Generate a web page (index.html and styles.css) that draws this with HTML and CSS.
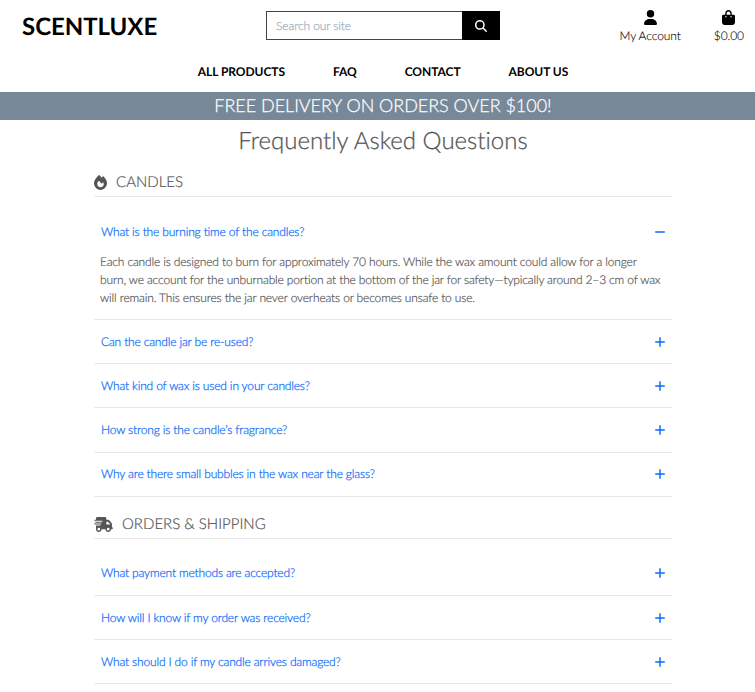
FILE: index.html
```html
<!DOCTYPE html>
<html lang="en">
<head>
<meta charset="utf-8">
<title>Frequently Asked Questions - ScentLuxe</title>
<link rel="stylesheet" href="styles.css">
</head>
<body>
<svg class="sprite" aria-hidden="true">
  <symbol id="plus" viewBox="0 0 10 10"><path d="M5 .2v9.6M.2 5h9.6" stroke="currentColor" stroke-width="1.5"/></symbol>
  <symbol id="minus" viewBox="0 0 10 10"><path d="M.2 5h9.6" stroke="currentColor" stroke-width="1.5"/></symbol>
</svg>
<header class="top">
  <a class="logo" href="#">SCENTLUXE</a>
  <form class="search">
    <input class="search-input" type="text" placeholder="Search our site">
    <button class="search-btn" type="button" aria-label="Search"><svg viewBox="0 0 512 512"><path fill="currentColor" d="M416 208c0 45.900-14.900 88.300-40 122.700L502.600 457.400c12.500 12.500 12.500 32.800 0 45.300s-32.800 12.500-45.300 0L330.700 376c-34.400 25.200-76.800 40-122.700 40C93.100 416 0 322.900 0 208S93.100 0 208 0S416 93.100 416 208zM208 352a144 144 0 1 0 0-288 144 144 0 1 0 0 288z"/></svg></button>
  </form>
  <div class="user">
    <a class="user-link" href="#"><svg class="i-user" viewBox="0 0 448 512"><path d="M224 256A128 128 0 1 0 224 0a128 128 0 1 0 0 256zm-45.700 48C79.800 304 0 383.800 0 482.300C0 498.700 13.300 512 29.700 512H418.300c16.400 0 29.700-13.300 29.700-29.700C448 383.800 368.200 304 269.700 304H178.300z"/></svg><span>My Account</span></a>
    <a class="user-link" href="#"><svg class="i-bag" viewBox="0 0 448 512"><path d="M160 112c0-35.300 28.700-64 64-64s64 28.700 64 64v48H160V112zm-48 48H48c-26.500 0-48 21.500-48 48V416c0 53 43 96 96 96H352c53 0 96-43 96-96V208c0-26.500-21.500-48-48-48H336V112C336 50.100 285.900 0 224 0S112 50.100 112 112v48zm24 48a24 24 0 1 1 0 48 24 24 0 1 1 0-48zm152 24a24 24 0 1 1 48 0 24 24 0 1 1-48 0z"/></svg><span>$0.00</span></a>
  </div>
</header>
<nav class="nav"><a href="#">ALL PRODUCTS</a><a href="#">FAQ</a><a href="#">CONTACT</a><a href="#">ABOUT US</a></nav>
<div class="banner">FREE DELIVERY ON ORDERS OVER $100!</div>
<main class="faq">
  <h1 class="title">Frequently Asked Questions</h1>
  <section class="group">
    <h2 class="heading"><svg class="i-fire" viewBox="0 0 448 512"><path fill="currentColor" d="M159.300 5.400c7.800-7.300 19.900-7.200 27.700 .1c27.600 25.900 53.500 53.800 77.700 84c11-14.400 23.500-30.100 37-42.900c7.900-7.400 20.100-7.400 28 .1c34.600 33 63.900 76.600 84.500 118c20.300 40.800 33.800 82.500 33.800 111.900C448 404.200 348.200 512 224 512C98.400 512 0 404.100 0 276.500c0-38.400 17.800-85.300 45.400-131.700C73.300 97.700 112.700 48.600 159.300 5.400zM225.700 416c25.300 0 47.700-7 68.800-21c42.100-29.400 53.400-88.200 28.100-134.400c-4.500-9-16-9.600-22.500-2l-25.200 29.300c-6.600 7.600-18.500 7.400-24.700-.5c-16.500-21-46-58.500-62.800-79.800c-6.300-8-18.300-8.100-24.700-.1c-33.800 42.500-50.800 69.300-50.800 99.400C112 375.400 162.600 416 225.700 416z"/></svg>CANDLES</h2>
    <div class="item"><a class="question" href="#">What is the burning time of the candles?<svg class="toggle"><use href="#minus"/></svg></a>
      <p class="answer">Each candle is designed to burn for approximately 70 hours. While the wax amount could allow for a longer burn, we account for the unburnable portion at the bottom of the jar for safety—typically around 2–3 cm of wax will remain. This ensures the jar never overheats or becomes unsafe to use.</p></div>
    <div class="item"><a class="question" href="#">Can the candle jar be re-used?<svg class="toggle"><use href="#plus"/></svg></a></div>
    <div class="item"><a class="question" href="#">What kind of wax is used in your candles?<svg class="toggle"><use href="#plus"/></svg></a></div>
    <div class="item"><a class="question" href="#">How strong is the candle’s fragrance?<svg class="toggle"><use href="#plus"/></svg></a></div>
    <div class="item"><a class="question" href="#">Why are there small bubbles in the wax near the glass?<svg class="toggle"><use href="#plus"/></svg></a></div>
  </section>
  <section class="group">
    <h2 class="heading"><svg class="i-truck" viewBox="0 0 640 512"><path fill="currentColor" d="M112 0C85.500 0 64 21.500 64 48V96H16c-8.800 0-16 7.200-16 16s7.200 16 16 16H272c8.800 0 16 7.200 16 16s-7.200 16-16 16H48c-8.800 0-16 7.200-16 16s7.200 16 16 16H240c8.800 0 16 7.200 16 16s-7.200 16-16 16H16c-8.800 0-16 7.200-16 16s7.200 16 16 16H208c8.800 0 16 7.200 16 16s-7.200 16-16 16H64V416c0 53 43 96 96 96s96-43 96-96H384c0 53 43 96 96 96s96-43 96-96h32c17.700 0 32-14.300 32-32s-14.300-32-32-32V237.300c0-17-6.700-33.300-18.700-45.300L512 114.700c-12-12-28.300-18.700-45.300-18.700H416V48c0-26.500-21.500-48-48-48H112zM544 237.300V256H416V160h50.700L544 237.300zM160 368a48 48 0 1 1 0 96 48 48 0 1 1 0-96zm272 48a48 48 0 1 1 96 0 48 48 0 1 1-96 0z"/></svg>ORDERS &amp; SHIPPING</h2>
    <div class="item"><a class="question" href="#">What payment methods are accepted?<svg class="toggle"><use href="#plus"/></svg></a></div>
    <div class="item"><a class="question" href="#">How will I know if my order was received?<svg class="toggle"><use href="#plus"/></svg></a></div>
    <div class="item"><a class="question" href="#">What should I do if my candle arrives damaged?<svg class="toggle"><use href="#plus"/></svg></a></div>
  </section>
</main>
</body>
</html>
```
FILE: styles.css
```css
* { box-sizing: border-box; }
body { margin: 0; background: #fff; color: #000; font: 300 12px/18px Lato, sans-serif; font-variant-ligatures: none; text-rendering: geometricPrecision; overflow: hidden; }
a { color: inherit; text-decoration: none; }
.sprite { display: none; }
.top { display: grid; grid-template-columns: 244px 234px 1fr; height: 52px; padding: 0 11px 0 22px; }
.logo { padding-top: 9px; font-size: 24px; line-height: 36px; font-weight: 700; letter-spacing: -.03px; }
.search { display: flex; height: 29px; margin: 11.4px 0 0; }
.search-input { flex: 1; min-width: 0; border: 1px solid #444; border-right: 0; padding: 0 9px; font: 300 12px Lato, sans-serif; letter-spacing: -.1px; background: #fff; }
.search-input::placeholder { color: #a3b1bf; opacity: 1; -webkit-text-stroke: .25px; }
.search-btn { display: grid; place-items: center; width: 38px; border: 0; padding: 0; background: #000; color: #fff; }
.search-btn svg { width: 12px; height: 12px; }
.user { display: flex; justify-content: flex-end; gap: 33px; padding-top: 10px; letter-spacing: -.08px; -webkit-text-stroke: .1px; }
.user-link { display: flex; flex-direction: column; align-items: center; gap: 2px; }
.i-user, .i-bag { width: 13px; height: 15px; }
.nav { display: flex; justify-content: center; gap: 48px; height: 40px; padding: 11px 0 11px 11px; font-weight: 700; letter-spacing: -.05px; }
.banner { height: 28px; padding-left: 11px; background: #778899; color: #fff; text-align: center; font-size: 18px; line-height: 27px; letter-spacing: -.03px; -webkit-text-stroke: .25px; }
.faq { width: 578px; margin: 0 auto 0 94px; color: #555; }
.title { margin: 0; padding-top: 3px; height: 52px; text-align: center; font-size: 24px; line-height: 36px; font-weight: 300; -webkit-text-stroke: .25px; }
.heading { display: flex; align-items: center; gap: 9px; height: 25px; margin: 0 0 13px; padding-bottom: 3px; border-bottom: 1px solid #e9e9e9; font-size: 15px; line-height: 21px; font-weight: 300; -webkit-text-stroke: .2px; }
.i-fire { width: 13px; height: 15px; }
.i-truck { width: 19px; height: 15px; }
.group + .group { margin-top: 17.3px; }
.item { border-bottom: 1px solid #e9e9e9; }
.question { display: flex; align-items: center; justify-content: space-between; height: 43.14px; padding: 0 7px; color: #0d6efd; letter-spacing: -.16px; -webkit-text-stroke: .25px; }
.toggle { width: 10px; height: 10px; }
.answer { margin: 0; padding: 0 8px 12px 6px; letter-spacing: -.15px; -webkit-text-stroke: .2px; }
```
